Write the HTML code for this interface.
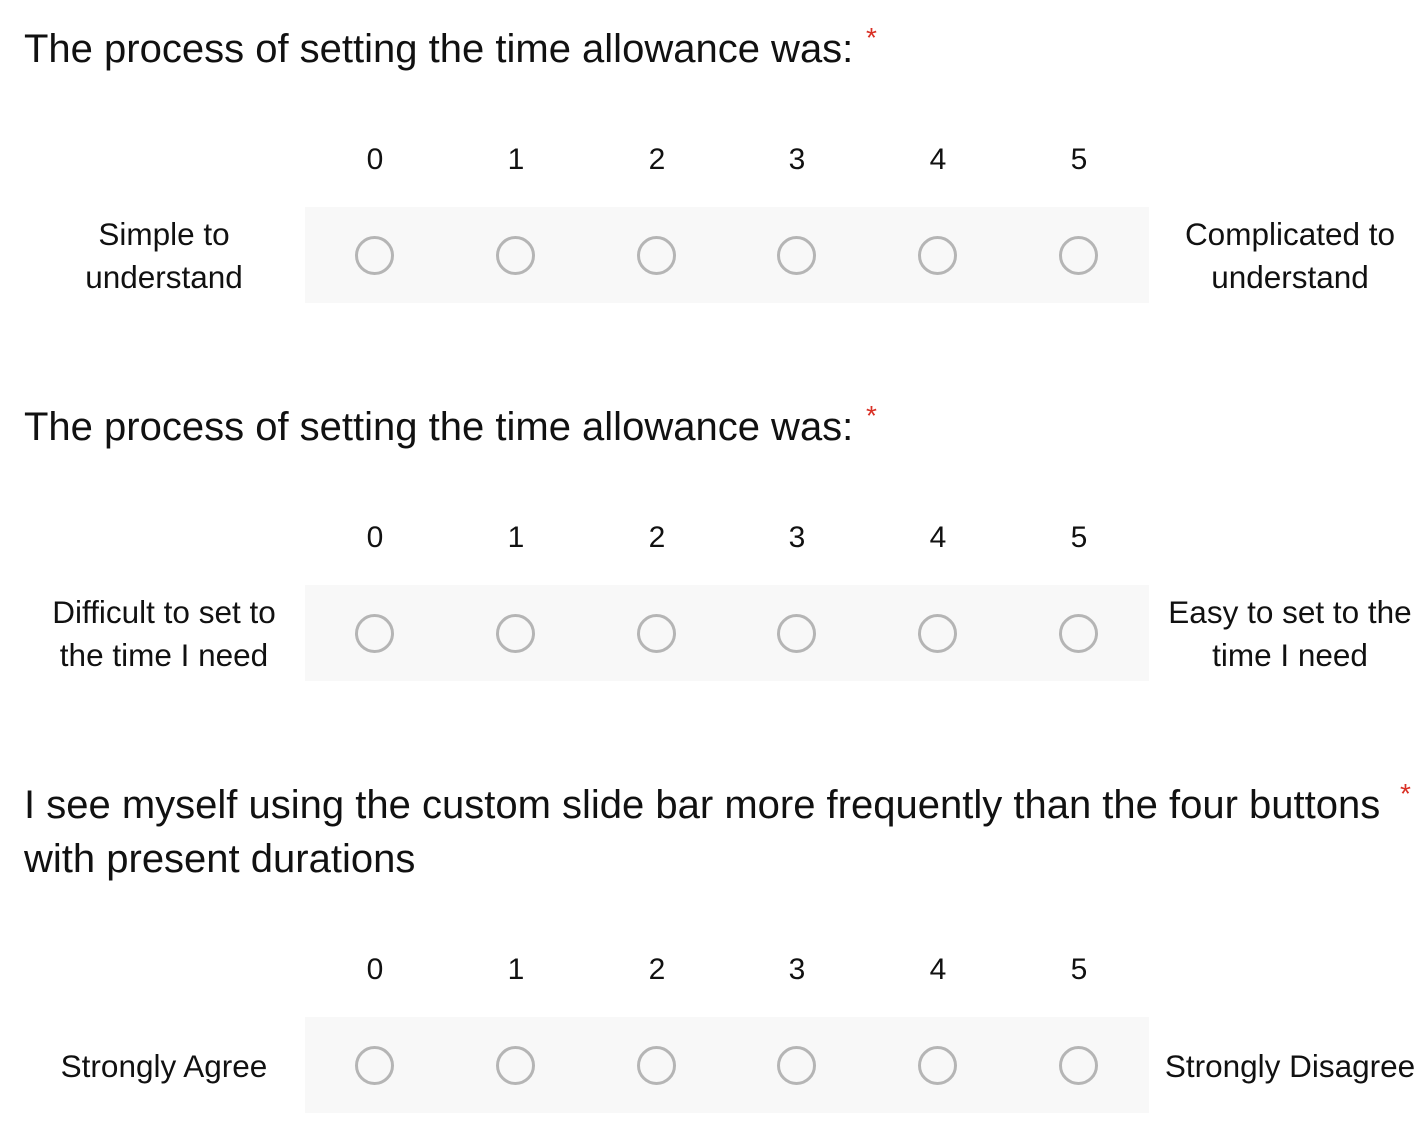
<!DOCTYPE html>
<html><head><meta charset="utf-8"><style>
body{margin:0;width:1425px;height:1122px;background:#fff;font-family:"Liberation Sans",Arial,sans-serif;color:#111;position:relative;overflow:hidden}
.t{position:absolute;left:24px;font-size:40px;line-height:54px;white-space:nowrap}
.star{color:#d93025;font-size:28px;position:absolute;top:-8px}
.n{position:absolute;font-size:30px;width:60px;text-align:center;margin-left:-30px}
.band{position:absolute;left:305px;width:844px;height:96px;background:#f8f8f8}
.r{position:absolute;width:33px;height:33px;border:3.5px solid #b5b5b5;border-radius:50%;margin-left:-20px;margin-top:-20px}
.lb{position:absolute;font-size:31.5px;line-height:43px;text-align:center;width:320px;white-space:nowrap}
</style></head><body>

<div class="t" style="top:22px">The process of setting the time allowance was:</div><span class="star" style="left:866px;top:22px">*</span>
<div class="t" style="top:400px">The process of setting the time allowance was:</div><span class="star" style="left:866px;top:400px">*</span>
<div class="t" style="top:778px">I see myself using the custom slide bar more frequently than the four buttons<br>with present durations</div>
<span class="star" style="left:1400px;top:778px">*</span>

<div class="n" style="left:375px;top:143px">0</div><div class="n" style="left:516px;top:143px">1</div><div class="n" style="left:657px;top:143px">2</div><div class="n" style="left:797px;top:143px">3</div><div class="n" style="left:938px;top:143px">4</div><div class="n" style="left:1079px;top:143px">5</div>
<div class="band" style="top:207px"></div>
<div class="r" style="left:375px;top:256px"></div><div class="r" style="left:516px;top:256px"></div><div class="r" style="left:657px;top:256px"></div><div class="r" style="left:797px;top:256px"></div><div class="r" style="left:938px;top:256px"></div><div class="r" style="left:1079px;top:256px"></div>
<div class="lb" style="left:4px;top:213px">Simple to<br>understand</div>
<div class="lb" style="left:1130px;top:213px">Complicated to<br>understand</div>

<div class="n" style="left:375px;top:521px">0</div><div class="n" style="left:516px;top:521px">1</div><div class="n" style="left:657px;top:521px">2</div><div class="n" style="left:797px;top:521px">3</div><div class="n" style="left:938px;top:521px">4</div><div class="n" style="left:1079px;top:521px">5</div>
<div class="band" style="top:585px"></div>
<div class="r" style="left:375px;top:634px"></div><div class="r" style="left:516px;top:634px"></div><div class="r" style="left:657px;top:634px"></div><div class="r" style="left:797px;top:634px"></div><div class="r" style="left:938px;top:634px"></div><div class="r" style="left:1079px;top:634px"></div>
<div class="lb" style="left:4px;top:591px">Difficult to set to<br>the time I need</div>
<div class="lb" style="left:1130px;top:591px">Easy to set to the<br>time I need</div>

<div class="n" style="left:375px;top:953px">0</div><div class="n" style="left:516px;top:953px">1</div><div class="n" style="left:657px;top:953px">2</div><div class="n" style="left:797px;top:953px">3</div><div class="n" style="left:938px;top:953px">4</div><div class="n" style="left:1079px;top:953px">5</div>
<div class="band" style="top:1017px"></div>
<div class="r" style="left:375px;top:1066px"></div><div class="r" style="left:516px;top:1066px"></div><div class="r" style="left:657px;top:1066px"></div><div class="r" style="left:797px;top:1066px"></div><div class="r" style="left:938px;top:1066px"></div><div class="r" style="left:1079px;top:1066px"></div>
<div class="lb" style="left:4px;top:1045px">Strongly Agree</div>
<div class="lb" style="left:1130px;top:1045px">Strongly Disagree</div>

</body></html>
